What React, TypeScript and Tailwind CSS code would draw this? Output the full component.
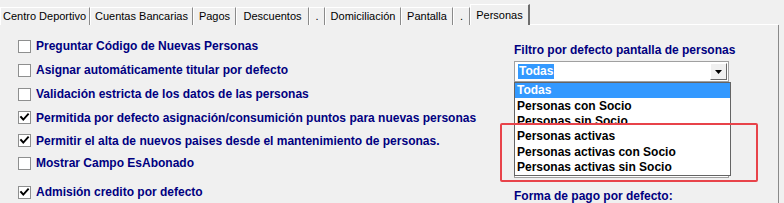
import React from 'react';

const tabs = [
    { label: 'Centro Deportivo', w: 'w-[90px] justify-start pl-[2px]' },
    { label: 'Cuentas Bancarias', w: 'w-[103px] justify-center' },
    { label: 'Pagos', w: 'w-[43px] justify-center' },
    { label: 'Descuentos', w: 'w-[73px] justify-center' },
    { label: '.', w: 'w-[16px] justify-center' },
    { label: 'Domiciliación', w: 'w-[76px] justify-center' },
    { label: 'Pantalla', w: 'w-[52px] justify-center' },
    { label: '.', w: 'w-[17px] justify-center' },
];

const options = [
    { label: 'Preguntar Código de Nuevas Personas', checked: false, h: 'h-[24px]' },
    { label: 'Asignar automáticamente titular por defecto', checked: false, h: 'h-[24px]' },
    { label: 'Validación estricta de los datos de las personas', checked: false, h: 'h-[24px]' },
    { label: 'Permitida por defecto asignación/consumición puntos para nuevas personas', checked: true, h: 'h-[23px]' },
    { label: 'Permitir el alta de nuevos paises desde el mantenimiento de personas.', checked: true, h: 'h-[23px]' },
    { label: 'Mostrar Campo EsAbonado', checked: false, h: 'h-[22px]' },
    { label: 'Admisión credito por defecto', checked: true, h: 'h-[29px] pt-[7px]' },
];

// row heights alternate a little, as in the native list
const filtros = [
    { label: 'Todas', h: 'h-[15px] leading-[15px]' },
    { label: 'Personas con Socio', h: 'h-[16px] leading-[16px]' },
    { label: 'Personas sin Socio', h: 'h-[15px] leading-[15px]' },
    { label: 'Personas activas', h: 'h-[15px] leading-[15px]' },
    { label: 'Personas activas con Socio', h: 'h-[16px] leading-[16px]' },
    { label: 'Personas activas sin Socio', h: 'h-[15px] leading-[15px]' },
];

const CheckBox: React.FC<{ checked: boolean }> = ({ checked }) => (
    <div className="w-[13px] h-[13px] shrink-0 border border-[#8e8f8f] bg-white flex items-center justify-center">
        {checked && (
            <svg width="11" height="11" viewBox="0 0 11 11">
                <polyline points="2,5 4.3,7.6 9,2.4" fill="none" stroke="#000" strokeWidth="1.9" strokeLinecap="square" />
            </svg>
        )}
    </div>
);

const ArrowButton: React.FC = () => (
    <div className="w-[17px] h-[17px] bg-[#f0f0f0] border border-t-white border-l-white border-b-[#696969] border-r-[#696969] flex items-center justify-center">
        <svg width="7" height="4" viewBox="0 0 7 4">
            <polygon points="0,0 7,0 3.5,4" fill="#000" />
        </svg>
    </div>
);

const App: React.FC = () => {
    return (
        <div className="relative w-[784px] h-[203px] overflow-hidden bg-[#f0f0f0] font-['Liberation_Sans',Arial,sans-serif]">
            {/* tab strip */}
            <div className="flex items-end h-[25px]">
                {tabs.map((t, i) => (
                    <div
                        key={i}
                        className={`${t.w} h-[18px] shrink-0 flex items-center border-t border-l border-t-white border-l-white border-r border-r-[#8a8a8a] text-[11px] leading-none text-black`}
                    >
                        {t.label}
                    </div>
                ))}
                <div className="w-[60px] h-[21px] shrink-0 flex items-start justify-center pt-[5px] border-t border-l border-t-white border-l-white border-r-2 border-r-[#6d6d6d] text-[11px] leading-none text-black">
                    Personas
                </div>
                <div className="flex-1 h-px bg-white mr-[6px]" />
            </div>

            {/* panel */}
            <div className="flex h-[178px] mr-[5px] border-r border-r-[#8a8a8a] pl-[18px]">
                <div className="w-[496px] flex flex-col pt-[9px]">
                    {options.map((o, i) => (
                        <div key={i} className={`${o.h} shrink-0 flex items-center`}>
                            <CheckBox checked={o.checked} />
                            <span className="ml-[5px] text-[12px] font-bold text-[#000080] whitespace-nowrap">{o.label}</span>
                        </div>
                    ))}
                </div>

                <div className="w-[217px] flex flex-col pt-[18px]">
                    <div className="h-[14px] leading-[14px] text-[12px] font-bold text-[#000080] whitespace-nowrap">
                        Filtro por defecto pantalla de personas
                    </div>
                    <div className="mt-[4px] w-[215px] h-[21px] border border-[#a0a0a0] bg-white flex items-center justify-between pl-[3px] pr-px">
                        <span className="bg-[#3399ff] text-white text-[12px] font-bold leading-[15px] px-px">Todas</span>
                        <ArrowButton />
                    </div>
                    <div className="mt-[75px] w-[215px] h-[21px] border border-[#a0a0a0] bg-white flex items-center justify-end pr-px">
                        <ArrowButton />
                    </div>
                    <div className="mt-[11px] h-[14px] leading-[14px] text-[12px] font-bold text-[#000080] whitespace-nowrap">
                        Forma de pago por defecto:
                    </div>
                </div>
            </div>

            {/* open dropdown list */}
            <div className="absolute left-[514px] top-[82px] w-[217px] border border-[#646464] bg-white">
                {filtros.map((f, i) => (
                    <div
                        key={i}
                        className={`${f.h} pl-[2px] text-[12px] font-bold whitespace-nowrap ${i === 0 ? 'bg-[#3399ff] text-white' : 'text-black'}`}
                    >
                        {f.label}
                    </div>
                ))}
            </div>

            {/* annotation */}
            <div className="absolute left-[500px] top-[123px] w-[258px] h-[59px] border-2 border-[#e8434a] rounded-[2px]" />
        </div>
    );
};

export default App;
